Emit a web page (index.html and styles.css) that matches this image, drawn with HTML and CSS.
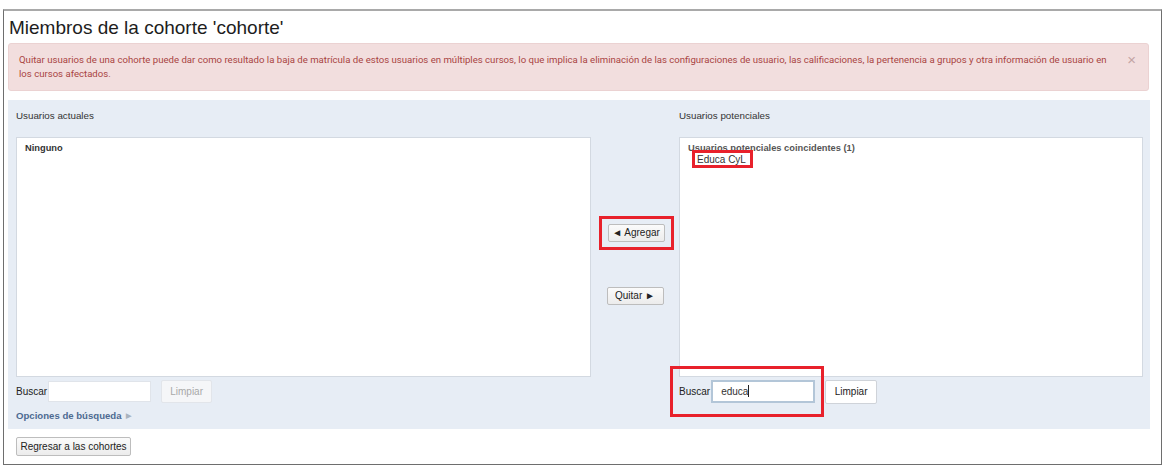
FILE: index.html
```html
<!DOCTYPE html>
<html lang="es">
<head>
<meta charset="utf-8">
<title>Miembros de la cohorte</title>
<link rel="stylesheet" href="styles.css">
</head>
<body>
<div class="frame">
  <h2 class="title">Miembros de la cohorte 'cohorte'</h2>
  <div class="alert">
    <p class="alert-text">Quitar usuarios de una cohorte puede dar como resultado la baja de matrícula de estos usuarios en múltiples cursos, lo que implica la eliminación de las configuraciones de usuario, las calificaciones, la pertenencia a grupos y otra información de usuario en los cursos afectados.</p>
    <span class="alert-close">×</span>
  </div>
  <div class="panel">
    <div class="col">
      <div class="col-head">Usuarios actuales</div>
      <div class="listbox">
        <div class="opt-group">Ninguno</div>
      </div>
      <div class="search-row">
        <label class="search-label">Buscar</label>
        <input class="search-input" type="text">
        <button class="btn btn-disabled btn-clear">Limpiar</button>
      </div>
      <div class="options">Opciones de búsqueda <span class="options-arrow">▶</span></div>
    </div>
    <div class="mid">
      <div class="mark-box">
        <button class="btn btn-move">◄ Agregar</button>
      </div>
      <button class="btn btn-move btn-remove">Quitar ►</button>
    </div>
    <div class="col col-right">
      <div class="col-head">Usuarios potenciales</div>
      <div class="listbox">
        <div class="opt-group opt-group-muted">Usuarios potenciales coincidentes (1)</div>
        <div class="opt">Educa CyL</div>
        <span class="mark mark-user"></span>
      </div>
      <div class="search-row">
        <label class="search-label">Buscar</label>
        <div class="search-focus">educa<span class="caret"></span></div>
        <button class="btn btn-clear btn-clear-on">Limpiar</button>
      </div>
      <span class="mark mark-search"></span>
    </div>
  </div>
  <div class="footer">
    <button class="btn btn-back">Regresar a las cohortes</button>
  </div>
</div>
</body>
</html>
```
FILE: styles.css
```css
* { box-sizing: border-box; }
html, body { margin: 0; padding: 0; background: #fff; }
body { font-family: "Liberation Sans", Arial, sans-serif; color: #333; }

.frame {
  margin: 9px 0 0 3px;
  width: 1159px;
  height: 456px;
  border: 1px solid #6e6e6e;
  border-top: 2px solid #a9a9a9;
  padding: 0 0 0 4px;
}

.title {
  margin: 0;
  padding: 6px 0 0 1px;
  height: 32px;
  font-family: "Liberation Sans", Arial, sans-serif;
  font-weight: normal;
  font-size: 19px;
  line-height: 22px;
  color: #1d1d1d;
}

.alert {
  width: 1141px;
  height: 48px;
  background: #f2dede;
  border: 1px solid #ebd2d2;
  border-radius: 3px;
  display: flex;
  justify-content: space-between;
  padding: 9px 12px 0 10px;
}
.alert-text {
  margin: 0;
  width: 1090px;
  font-family: Roboto, "Noto Sans", sans-serif;
  font-size: 9.6px;
  line-height: 14px;
  color: #a94442;
}
.alert-close {
  font-family: "Liberation Sans", Arial, sans-serif;
  font-size: 15px;
  line-height: 14px;
  color: #c3a4a4;
}

.panel {
  margin-top: 9px;
  width: 1142px;
  height: 329px;
  background: #e7edf5;
  display: grid;
  grid-template-columns: 575px 88px 464px;
  padding: 0 7px 0 8px;
  font-size: 9.8px;
}
.col { position: relative; display: flex; flex-direction: column; }
.col-head {
  padding-top: 9px;
  height: 37px;
  line-height: 13px;
  color: #333;
}
.listbox {
  position: relative;
  height: 240px;
  background: #fff;
  border: 1px solid #d3d9e1;
  padding: 4px 8px;
}
.opt-group { font-weight: bold; font-size: 9.3px; line-height: 12px; color: #333; }
.opt-group-muted { color: #555; }
.opt { padding-left: 9px; line-height: 11px; color: #333; font-size: 10px; }

.search-row {
  display: flex;
  align-items: center;
  height: 27px;
  padding-top: 2px;
}
.search-label { color: #222; margin-right: 1px; font-size: 10px; }
.search-input {
  width: 103px;
  height: 21px;
  border: 1px solid #e0e4ea;
  background: #fff;
  margin: 0 10px 0 0;
  padding: 0;
}
.search-focus {
  width: 104px;
  height: 23px;
  border: 2px solid #b3c6d8;
  background: #fff;
  padding: 3px 8px;
  line-height: 14px;
  font-size: 10px;
  color: #333;
  margin-right: 10px;
}
.caret { display: inline-block; width: 1px; height: 12px; background: #222; vertical-align: -2px; }

.options {
  margin-top: 5px;
  font-weight: bold;
  font-size: 9.6px;
  color: #4d6a91;
  line-height: 14px;
}
.options-arrow { font-size: 7px; color: #a9b3bf; margin-left: 2px; vertical-align: 1px; }

.btn {
  font-family: "Liberation Sans", Arial, sans-serif;
  font-size: 10px;
  color: #222;
  background: linear-gradient(#fbfbfb, #ececec);
  border: 1px solid #bdbdbd;
  border-radius: 2px;
  padding: 0 9px;
  height: 19px;
  line-height: 17px;
  white-space: nowrap;
  cursor: pointer;
}
.btn-clear { height: 23px; padding: 0 10px; }
.btn-disabled { color: #a8a8a8; background: #f5f6f8; border-color: #e2e5ea; }
.btn-clear-on { background: #fff; border-color: #cfd3d9; height: 24px; width: 52px; padding: 0; }
.btn-disabled.btn-clear { width: 51px; padding: 0; }

.mid {
  display: flex;
  flex-direction: column;
  align-items: center;
  padding-top: 116px;
}
.mark-box {
  width: 75px;
  height: 34px;
  border: 3px solid #e8212b;
  display: flex;
  align-items: center;
  justify-content: center;
  margin-left: 2px;
}
.btn-move { width: 57px; height: 18px; padding: 0; line-height: 16px; }
.btn-remove { margin-top: 37px; }

.mark { position: absolute; border: 3px solid #e8212b; }
.mark-user { left: 12px; top: 12px; width: 61px; height: 18px; }
.mark-search { left: -9px; top: 266px; width: 154px; height: 51px; }

.footer { padding: 7px 0 0 8px; }
.btn-back { height: 19px; width: 115px; padding: 0; }
```
